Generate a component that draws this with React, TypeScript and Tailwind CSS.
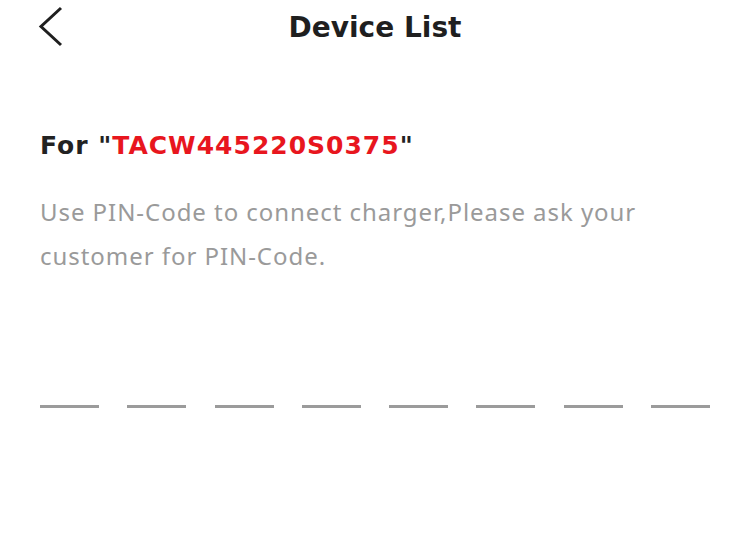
export default function App() {
  const slots = [0, 1, 2, 3, 4, 5, 6, 7];

  return (
    <div className="h-[556px] w-[750px] bg-white font-['Noto_Sans',sans-serif] text-[#1f1f1f]">
      {/* HEADER */}
      <header className="relative flex h-[56px] items-center justify-center">
        <button className="absolute left-[36px] top-[4px] text-[#1f1f1f]">
          <svg width="30" height="46" viewBox="0 0 30 46" fill="none" stroke="currentColor" strokeWidth="3" strokeLinecap="butt" strokeLinejoin="miter">
            <path d="M25 4 L5 22.5 L25 41" />
          </svg>
        </button>
        <h1 className="font-['DejaVu_Sans',sans-serif] text-[28px] font-bold leading-none">Device List</h1>
      </header>

      {/* CONTENT */}
      <main className="px-[40px] pt-[72px]">
        <h2 className="font-['DejaVu_Sans',sans-serif] text-[25px] font-bold leading-[36px] tracking-[1px] text-[#222]">
          For "<span className="text-[#e8161e]">TACW445220S0375</span>"
        </h2>
        <p className="mt-[26px] max-w-[620px] text-[24px] leading-[44px] tracking-[0.95px] text-[#9a9a9a]">
          Use PIN-Code to connect charger,Please ask your customer for PIN-Code.
        </p>

        <div className="mt-[127px] flex justify-between">
          {slots.map((i) => (
            <div key={i} className="h-[3px] w-[59px] bg-[#9b9b9b]" />
          ))}
        </div>
      </main>
    </div>
  );
}
